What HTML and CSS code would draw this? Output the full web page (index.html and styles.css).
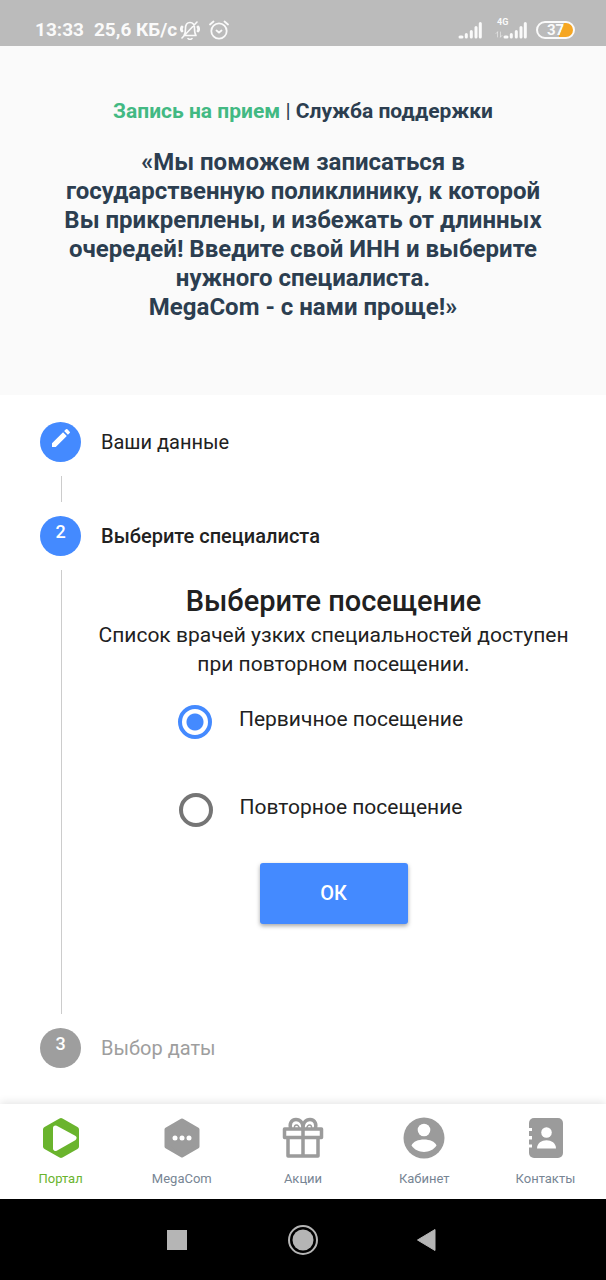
FILE: index.html
```html
<!DOCTYPE html>
<html lang="ru">
<head>
<meta charset="utf-8">
<meta name="viewport" content="width=device-width, initial-scale=1">
<title>Запись на прием</title>
<link rel="stylesheet" href="styles.css">
</head>
<body>
<div class="status-bar">
  <div class="status-group">
    <span class="clock">13:33</span>
    <span class="speed">25,6 КБ/с</span>
    <svg class="bell" width="20" height="20" viewBox="0 0 20 20" fill="none" stroke="currentColor" stroke-width="1.6" stroke-linecap="round" stroke-linejoin="round"><path d="M4 15.500c1.500-2 1.500-4 1.500-7 0-3.500 1.500-6 4.500-6s4.500 2.500 4.500 6 0 5 1.500 7zM8 18.500c1 1.200 3 1.200 4 0M17 2 2 18"/><path d="M2 7c-.8 1.500-.8 3 0 4M18 7c.8 1.500.8 3 0 4" stroke-width="2.800"/></svg>
    <svg width="20" height="20" viewBox="0 0 20 20" fill="none" stroke="currentColor" stroke-width="1.800" stroke-linecap="round"><circle cx="10" cy="11" r="7.700"/><path d="m7.500 10.500 2.500 2 2.500-2M1 4.500 4.500 1.500M19 4.500l-3.500-3"/></svg>
  </div>
  <div class="status-group">
    <svg width="24" height="18" viewBox="0 0 24 18" fill="none" stroke="currentColor" stroke-width="3" stroke-linecap="round"><path d="M2 16h2M8.300 16v-2.500M13.300 16v-5.500M18 16V6.500M22.300 16V2.500"/></svg>
    <div class="mobile-data">
      <span class="network">4G</span>
      <svg width="32" height="18" viewBox="0 0 32 18" fill="none" stroke="currentColor" stroke-width="3" stroke-linecap="round"><path d="M10 16h2M16.300 16v-2.500M21.300 16v-5.500M26 16V6.500M30.300 16V2.500"/><path d="M2.500 16v-5M1 12.500 2.500 11M5.500 11v5M7 14.500 5.500 16" stroke-width="1" opacity=".5"/></svg>
    </div>
    <div class="battery">37</div>
  </div>
</div>

<header class="intro">
  <nav class="intro-nav"><a class="current" href="#">Запись на прием</a> | <a href="#">Служба поддержки</a></nav>
  <h1>«Мы поможем записаться в государственную поликлинику, к которой Вы прикреплены, и избежать от длинных очередей! Введите свой ИНН и выберите нужного специалиста.<br>MegaCom - с нами проще!»</h1>
</header>

<main class="stepper">
  <div class="step">
    <span class="badge"><svg width="24" height="24" viewBox="0 0 24 24" fill="currentColor"><path d="M3 17.250V21h3.750L17.810 9.940l-3.750-3.750zM20.710 7.040a1 1 0 0 0 0-1.410l-2.340-2.340a1 1 0 0 0-1.410 0l-1.830 1.830 3.750 3.750z"/></svg></span>
    <span>Ваши данные</span>
  </div>
  <div class="step-body empty"></div>

  <div class="step active">
    <span class="badge">2</span>
    <span>Выберите специалиста</span>
  </div>
  <form class="step-body visit">
    <h2>Выберите посещение</h2>
    <p>Список врачей узких специальностей доступен при повторном посещении.</p>
    <div class="options">
      <label class="option"><input type="radio" name="visit" checked><span>Первичное посещение</span></label>
      <label class="option"><input type="radio" name="visit"><span>Повторное посещение</span></label>
    </div>
    <button class="ok" type="button">ОК</button>
  </form>

  <div class="step disabled">
    <span class="badge">3</span>
    <span>Выбор даты</span>
  </div>
</main>

<nav class="tabs">
  <a class="tab selected" href="#">
    <svg width="42" height="42" viewBox="0 0 42 42"><path d="M21 4 36 12.500v17L21 38 6 29.500v-17z" fill="currentColor" stroke="currentColor" stroke-width="6" stroke-linejoin="round"/><path d="M15.500 11 34 21 15.500 31.500z" fill="#fff" stroke="#fff" stroke-width="5" stroke-linejoin="round"/></svg>
    <span>Портал</span>
  </a>
  <a class="tab" href="#">
    <svg width="42" height="42" viewBox="0 0 42 42"><path d="M21 3.500 36.500 12.500v17L21 38.500 5.500 29.500v-17z" fill="currentColor" stroke="currentColor" stroke-width="4" stroke-linejoin="round"/><g fill="#fff"><circle cx="14" cy="21" r="2.500"/><circle cx="21" cy="21" r="2.500"/><circle cx="28" cy="21" r="2.500"/></g></svg>
    <span>MegaCom</span>
  </a>
  <a class="tab" href="#">
    <svg width="42" height="42" viewBox="0 0 42 42" fill="none" stroke="currentColor" stroke-width="3.500" stroke-linejoin="round"><path d="M2.500 12h37v8.500h-37zM6 20.500h30v18.500H6zM21 10V39M21 11c0-5-2.500-8.500-7-8.500-5 0-7 5-5 9.500M21 11c0-5 2.500-8.500 7-8.500 5 0 7 5 5 9.500"/><path d="M12.500 12c-.5-3 .5-4 2-4s2.500 1.500 3 4M29.500 12c.5-3-.5-4-2-4s-2.500 1.500-3 4" stroke-width="1.500"/></svg>
    <span>Акции</span>
  </a>
  <a class="tab" href="#">
    <svg width="42" height="42" viewBox="0 0 42 42"><circle cx="21" cy="21" r="20.500" fill="currentColor"/><g fill="#fff"><circle cx="21" cy="13" r="6.300"/><path d="M8.500 28.500c3-8 22-8 25 0-5.500 8.500-19.500 8.500-25 0z"/></g></svg>
    <span>Кабинет</span>
  </a>
  <a class="tab" href="#">
    <svg width="42" height="42" viewBox="0 0 42 42"><rect x="5" y="1" width="34" height="40" rx="5" fill="currentColor"/><g fill="#fff"><path d="M4 11h4v3H4zM4 19h4v3.500H4zM4 27.500h4v3H4z"/><circle cx="22.500" cy="15.500" r="5.300"/><path d="M13 31.500c0-11 19-11 19 0z"/></g></svg>
    <span>Контакты</span>
  </a>
</nav>

<div class="system-nav">
  <button type="button" aria-label="Недавние"><svg width="32" height="32" viewBox="0 0 32 32" fill="currentColor"><path d="M5 6h20v20H5z"/></svg></button>
  <button type="button" aria-label="Домой"><svg width="32" height="32" viewBox="0 0 32 32"><circle cx="16" cy="16" r="10.500" fill="currentColor"/><circle cx="16" cy="16" r="14" fill="none" stroke="currentColor" stroke-width="2"/></svg></button>
  <button type="button" aria-label="Назад"><svg width="32" height="32" viewBox="0 0 32 32" fill="currentColor" stroke="currentColor" stroke-linejoin="round"><path d="M5.500 16 23 5.500v21z"/></svg></button>
</div>
</body>
</html>
```
FILE: styles.css
```css
* { box-sizing: border-box; }

body {
  margin: 0;
  min-height: 100vh;
  display: flex;
  flex-direction: column;
  background: #fff;
  color: #212121;
  font-family: Roboto, "Noto Sans", sans-serif;
  font-size: 20px;
  line-height: 28px;
}

a { color: inherit; text-decoration: none; }
svg { display: block; flex: none; }

.status-bar {
  display: flex;
  justify-content: space-between;
  padding: 16px 31px 2px 35px;
  background: #bbb;
  color: #fafafa;
  font-size: 19px;
  font-weight: 700;
}
.status-group { display: flex; align-items: center; }
.clock { margin-right: 10px; }
.speed { margin-right: 3px; }
.bell { margin-right: 9px; }
.mobile-data { position: relative; margin: 0 9px 0 13px; }
.network {
  position: absolute;
  top: -4px;
  left: 2px;
  font-size: 9px;
  line-height: 10px;
}
.battery {
  width: 39px;
  border: 2px solid #fafafa;
  border-radius: 9px;
  background: linear-gradient(110deg, transparent 64%, #f5a623 65%);
  font-size: 15px;
  line-height: 14px;
  text-align: center;
}

.intro {
  padding: 51px 60px 73px;
  background: #fafafa;
  color: #2c3e50;
  text-align: center;
}
.intro-nav { font-size: 21px; }
.intro-nav a { font-weight: 700; }
.intro-nav .current { color: #42b983; }
.intro h1 {
  margin: 23px 0 0;
  font-size: 24px;
  font-weight: 700;
  line-height: 29px;
}

.stepper { flex: 1; padding: 27px 40px 36px; }
.step { display: flex; align-items: center; gap: 20px; }
.step.active { font-weight: 500; }
.step.disabled { color: #9e9e9e; }
.badge {
  display: flex;
  justify-content: center;
  width: 41px;
  height: 40px;
  padding-top: 2px;
  border-radius: 50%;
  background: #448aff;
  color: #fff;
  font-size: 18px;
  font-weight: 500;
}
.badge svg { margin-top: 2px; }
.disabled .badge { background: #9e9e9e; }

.step-body {
  margin: 14px 0 14px 21px;
  border-left: 1px solid #ccc;
}
.step-body.empty { height: 26px; }
.visit {
  padding: 14px 0 90px 39px;
  font-size: 21px;
  line-height: 29px;
  text-align: center;
}
.visit h2 {
  margin: 0 0 2px;
  font-size: 29px;
  font-weight: 500;
  line-height: 35px;
}
.visit p { margin: 0 -8px; }
.options {
  display: flex;
  flex-direction: column;
  align-items: center;
  gap: 54px;
  margin: 26px 0 36px;
  padding-right: 26px;
}
.option { display: flex; gap: 27px; }
.option input {
  appearance: none;
  width: 34px;
  height: 34px;
  margin: 0;
  border: 4px solid #757575;
  border-radius: 50%;
}
.option input:checked {
  border-color: #448aff;
  background: radial-gradient(circle, #448aff 8px, transparent 9px);
}
.ok {
  width: 148px;
  padding: 16px;
  border: 0;
  border-radius: 3px;
  background: #448aff;
  box-shadow: 0 2px 4px rgba(0, 0, 0, .35);
  color: #fff;
  font: inherit;
  font-size: 20px;
  font-weight: 500;
}

.tabs {
  display: grid;
  grid-template-columns: repeat(5, 1fr);
  padding: 13px 0 12px;
  background: #fff;
  box-shadow: 0 -2px 8px rgba(0, 0, 0, .1);
  color: #778594;
  font-size: 13px;
  line-height: 17px;
}
.tab { display: flex; flex-direction: column; align-items: center; gap: 11px; }
.tab svg { color: #9b9b9b; }
.tab.selected, .tab.selected svg { color: #6ab42d; }

.system-nav {
  display: flex;
  justify-content: center;
  gap: 93px;
  padding: 25px 0 24px;
  background: #000;
}
.system-nav button {
  padding: 0;
  border: 0;
  background: none;
  color: #b5b5b5;
}
```
